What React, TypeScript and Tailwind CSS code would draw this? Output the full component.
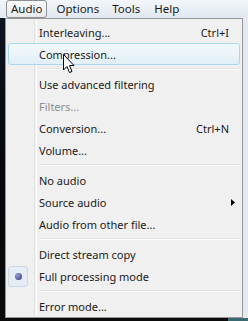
import { ReactNode } from "react";

type Item =
  | { kind: "sep" }
  | {
      kind: "item";
      label: string;
      shortcut?: string;
      disabled?: boolean;
      hover?: boolean;
      sub?: boolean;
      radio?: boolean;
    };

const items: Item[] = [
  { kind: "item", label: "Interleaving...", shortcut: "Ctrl+I" },
  { kind: "item", label: "Compression...", hover: true },
  { kind: "sep" },
  { kind: "item", label: "Use advanced filtering" },
  { kind: "item", label: "Filters...", disabled: true },
  { kind: "item", label: "Conversion...", shortcut: "Ctrl+N" },
  { kind: "item", label: "Volume..." },
  { kind: "sep" },
  { kind: "item", label: "No audio" },
  { kind: "item", label: "Source audio", sub: true },
  { kind: "item", label: "Audio from other file..." },
  { kind: "sep" },
  { kind: "item", label: "Direct stream copy" },
  { kind: "item", label: "Full processing mode", radio: true },
  { kind: "sep" },
  { kind: "item", label: "Error mode..." },
];

function Cursor() {
  return (
    <svg className="absolute left-[63px] top-[54px]" width="12" height="20" viewBox="0 0 12 20">
      <path
        d="M0.5 0.5 L0.5 16 L4 12.5 L6.5 18.5 L9 17.5 L6.5 11.5 L11 11.5 Z"
        fill="#fff"
        stroke="#000"
        strokeWidth="1"
      />
    </svg>
  );
}

function Row({ it }: { it: Extract<Item, { kind: "item" }> }): ReactNode {
  return (
    <div className="relative flex h-[22px] items-center">
      {it.hover && (
        <div className="absolute inset-y-0 left-px right-px rounded-[3px] border border-[#a8d8eb] bg-gradient-to-b from-[#f2f8fb] to-[#e2eff6]" />
      )}
      {it.radio && (
        <div className="absolute left-px top-px flex h-[21px] w-[20px] items-center justify-center rounded-[3px] border border-[#cdd8e4] bg-[#e6ecf3]">
          <div className="h-[7px] w-[7px] rounded-full bg-[radial-gradient(circle_at_35%_35%,#9aa0d8,#2c2f7a)]" />
        </div>
      )}
      <span
        className={
          "relative ml-[32px] flex-1 " + (it.disabled ? "text-[#8d8d8d]" : "text-[#1a1a1a]")
        }
      >
        {it.label}
      </span>
      {it.shortcut && <span className="relative mr-[12px] text-[#1a1a1a]">{it.shortcut}</span>}
      {it.sub && (
        <svg className="relative mr-[6px]" width="4" height="7" viewBox="0 0 4 7">
          <path d="M0 0 L4 3.5 L0 7 Z" fill="#000" />
        </svg>
      )}
    </div>
  );
}

export default function App() {
  return (
    <div
      className="relative h-[321px] w-[248px] overflow-hidden bg-[#dfe6ee] text-[11px] leading-none text-black"
      style={{ fontFamily: '"Noto Sans", "Open Sans", sans-serif' }}
    >
      <div className="flex h-[18px] items-stretch bg-gradient-to-b from-[#f3f6fa] to-[#e1e8f1] pl-[6px] text-[11.5px] text-[#1a1a1a]">
        <div className="flex items-center rounded-[3px] border border-[#8b8f94] bg-gradient-to-b from-[#fbfbfb] to-[#e8eaec] px-[4px]">
          Audio
        </div>
        <div className="flex items-center pl-[9px]">Options</div>
        <div className="flex items-center pl-[13px]">Tools</div>
        <div className="flex items-center pl-[14px]">Help</div>
      </div>

      <div className="flex h-[300px]">
        <div className="w-[5px] bg-gradient-to-b from-[#0d1520] via-[#06080c] to-[#0a0a0a]" />
        <div className="relative w-[238px] border border-[#979797] bg-[#f0f0f0] px-px pt-[2px]">
          <div className="absolute bottom-[2px] left-[28px] top-[2px] w-[2px] border-l border-[#e2e3e3] shadow-[1px_0_0_#fff]" />
          {items.map((it, i) =>
            it.kind === "sep" ? (
              <div key={i} className="flex h-[8px] items-center pl-[32px] pr-px">
                <div className="h-[2px] w-full border-t border-b border-t-[#e0e0e0] border-b-white" />
              </div>
            ) : (
              <Row key={i} it={it} />
            )
          )}
        </div>
        <div className="w-[5px] bg-[#e4eaf1]" />
      </div>
      <div className="flex h-[3px]">
        <div className="flex-1 bg-[#0b0b0b]" />
        <div className="w-[20px] bg-[#3a6a70]" />
      </div>
      <Cursor />
    </div>
  );
}
